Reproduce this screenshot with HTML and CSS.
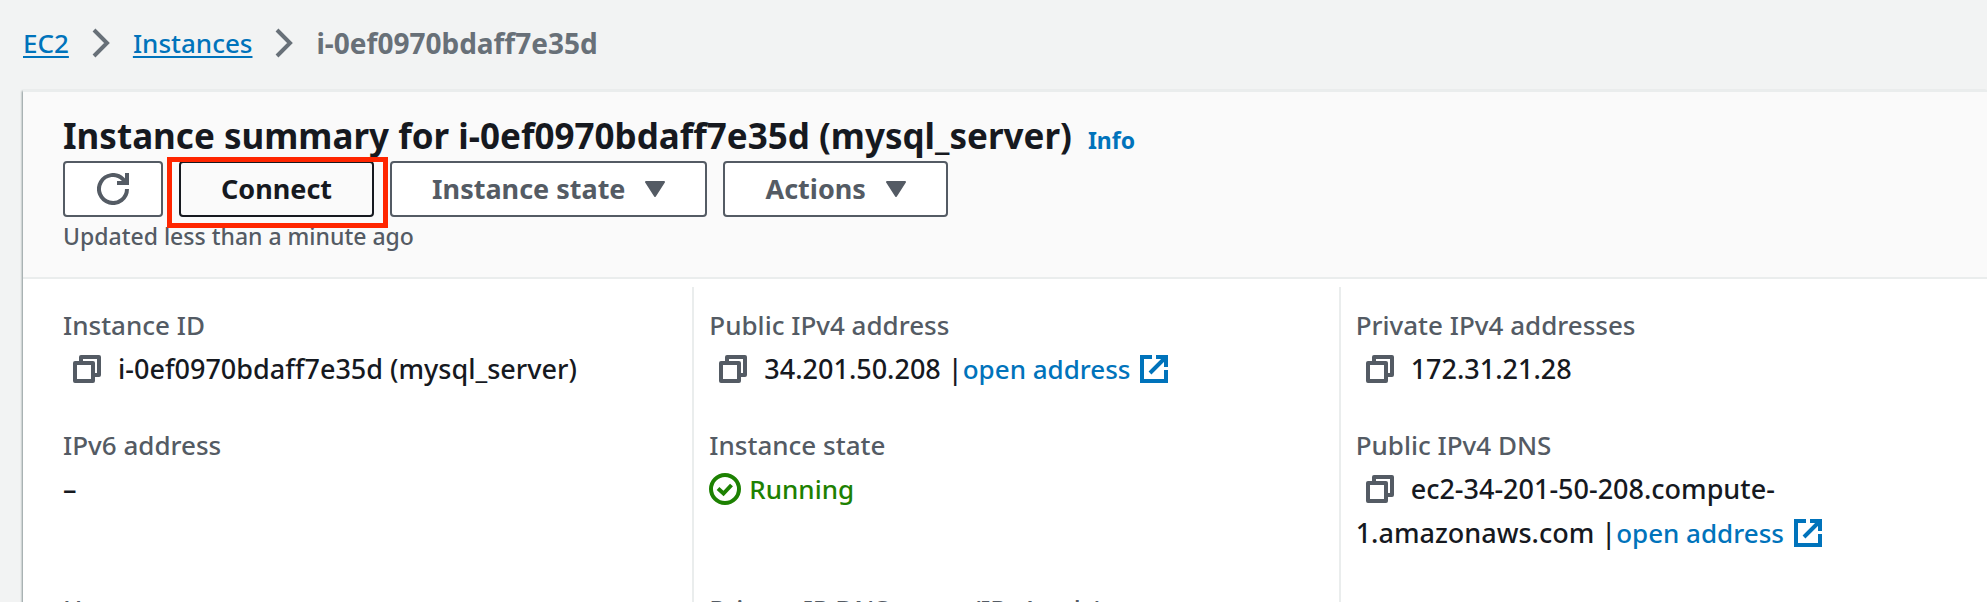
FILE: index.html
```html
<!DOCTYPE html>
<html lang="en">
<head>
<meta charset="utf-8">
<title>Instance summary</title>
<link rel="stylesheet" href="styles.css">
</head>
<body>
<svg class="defs" aria-hidden="true">
  <symbol id="chevron" viewBox="0 0 18 30"><path d="M2 2L15 15L2 28" fill="none" stroke="currentColor" stroke-width="4"/></symbol>
  <symbol id="copy" viewBox="0 0 28 28"><path d="M8 8V2H26V20H21M2 8H20V26H2Z" fill="none" stroke="currentColor" stroke-width="4" stroke-linejoin="round"/></symbol>
  <symbol id="external" viewBox="0 0 28 28"><path d="M12 2H2V26H26V15M16 2H26V12M10 18L25 3" fill="none" stroke="currentColor" stroke-width="4"/></symbol>
  <symbol id="caret" viewBox="0 0 20 16"><path d="M1 1H19L10 15Z" fill="currentColor" stroke="currentColor" stroke-width="2" stroke-linejoin="round"/></symbol>
</svg>
<nav class="breadcrumbs" aria-label="Breadcrumbs">
  <a href="#">EC2</a>
  <svg class="chevron"><use href="#chevron"/></svg>
  <a href="#">Instances</a>
  <svg class="chevron"><use href="#chevron"/></svg>
  <span class="current">i-0ef0970bdaff7e35d</span>
</nav>
<main class="panel">
  <header class="panel-header">
    <div class="heading">
      <h1>Instance summary for i-0ef0970bdaff7e35d (mysql_server)</h1>
      <a class="info" href="#">Info</a>
    </div>
    <div class="toolbar">
      <button class="button refresh" type="button" aria-label="Refresh">
        <svg class="icon-large" viewBox="0 0 32 32"><path d="M30 16A14 14 0 1 1 25.900 6.100L28 9M30 0V10H20" fill="none" stroke="currentColor" stroke-width="4"/></svg>
      </button>
      <div class="highlighted"><button class="button connect" type="button">Connect</button></div>
      <button class="button" type="button">Instance state <svg class="caret"><use href="#caret"/></svg></button>
      <button class="button" type="button">Actions <svg class="caret"><use href="#caret"/></svg></button>
    </div>
    <p class="updated">Updated less than a minute ago</p>
  </header>
  <dl class="details">
    <div class="cell">
      <dt>Instance ID</dt>
      <dd><button class="copy" type="button" aria-label="Copy instance ID"><svg class="icon"><use href="#copy"/></svg></button>i-0ef0970bdaff7e35d (mysql_server)</dd>
    </div>
    <div class="cell">
      <dt>Public IPv4 address</dt>
      <dd><button class="copy" type="button" aria-label="Copy public IPv4 address"><svg class="icon"><use href="#copy"/></svg></button>34.201.50.208 |<a href="#">open address<svg class="icon external"><use href="#external"/></svg></a></dd>
    </div>
    <div class="cell">
      <dt>Private IPv4 addresses</dt>
      <dd><button class="copy" type="button" aria-label="Copy private IPv4 address"><svg class="icon"><use href="#copy"/></svg></button>172.31.21.28</dd>
    </div>
    <div class="cell">
      <dt>IPv6 address</dt>
      <dd>–</dd>
    </div>
    <div class="cell">
      <dt>Instance state</dt>
      <dd class="running"><svg class="icon-large" viewBox="0 0 32 32"><g fill="none" stroke="currentColor" stroke-width="4"><circle cx="16" cy="16" r="14"/><path d="M9 15.500L14.500 20.500L22.500 12"/></g></svg>Running</dd>
    </div>
    <div class="cell">
      <dt>Public IPv4 DNS</dt>
      <dd><button class="copy" type="button" aria-label="Copy public IPv4 DNS"><svg class="icon"><use href="#copy"/></svg></button>ec2-34-201-50-208.compute-<wbr>1.amazonaws.com |<a href="#">open address<svg class="icon external"><use href="#external"/></svg></a></dd>
    </div>
    <div class="cell"><dt>Hostname type</dt></div>
    <div class="cell"><dt>Private IP DNS name (IPv4 only)</dt></div>
    <div class="cell"></div>
  </dl>
</main>
</body>
</html>
```
FILE: styles.css
```css
* { box-sizing: border-box; }
html { height: 100%; overflow: hidden; }
body {
  margin: 0;
  height: 100%;
  overflow: hidden;
  background: #f2f3f3;
  color: #16191f;
  font: 500 27px/44px "Noto Sans", "Open Sans", sans-serif;
}
a { color: #0073bb; font-size: 26px; text-decoration: none; }
svg { flex: none; }
.defs { display: none; }
.breadcrumbs {
  display: flex;
  align-items: center;
  gap: 23px;
  padding: 21px 23px 25px;
}
.breadcrumbs a { text-decoration: underline; text-decoration-thickness: 2px; text-underline-offset: 3px; }
.chevron { width: 18px; height: 30px; color: #687078; }
.current { color: #687078; font-size: 28px; font-weight: 700; }
.panel {
  margin-left: 23px;
  background: #fff;
  border-top: 2px solid #eaeded;
  box-shadow: -1px 1px 2px #879596;
}
.panel-header {
  padding: 20px 40px 22px;
  background: #fafafa;
  border-bottom: 2px solid #eaeded;
}
.heading { display: flex; align-items: baseline; gap: 16px; padding-bottom: 2px; }
h1 { margin: 0; font-size: 35px; line-height: 47px; font-weight: 700; }
.info { font-size: 23px; font-weight: 700; line-height: 36px; }
.toolbar { display: flex; gap: 16px; }
.button {
  display: flex;
  align-items: center;
  justify-content: center;
  gap: 20px;
  height: 56px;
  padding: 0 40px;
  border: 2px solid #545b64;
  border-radius: 4px;
  background: #fff;
  color: #545b64;
  font: inherit;
  font-weight: 700;
}
.refresh { padding: 0 32px; }
.connect { background: #fafafa; border-color: #16191f; color: #16191f; }
.highlighted { position: relative; }
.highlighted::after {
  content: "";
  position: absolute;
  inset: -4px -14px -11px -12px;
  border: 5px solid #ff2600;
  pointer-events: none;
}
.caret { width: 20px; height: 16px; }
.icon { width: 28px; height: 28px; }
.icon-large { width: 32px; height: 32px; }
.updated { margin: 0; color: #545b64; font-size: 23px; line-height: 38px; }
.details {
  display: grid;
  grid-template-columns: repeat(3, 1fr);
  margin: 0;
  padding: 8px 2px 0 23px;
}
.cell {
  padding: 16px 15px;
  border-left: 2px solid #eaeded;
}
.cell:nth-child(3n + 1) { border-left-color: transparent; }
dt { color: #545b64; font-size: 26px; }
dd { margin: 0; }
.copy {
  margin: 0 17px 0 10px;
  padding: 0;
  border: 0;
  background: none;
  color: #545b64;
  line-height: 0;
  vertical-align: -4px;
}
.external { margin-left: 10px; vertical-align: -4px; }
.running { display: flex; align-items: center; gap: 8px; color: #1d8102; font-size: 26px; }
```
